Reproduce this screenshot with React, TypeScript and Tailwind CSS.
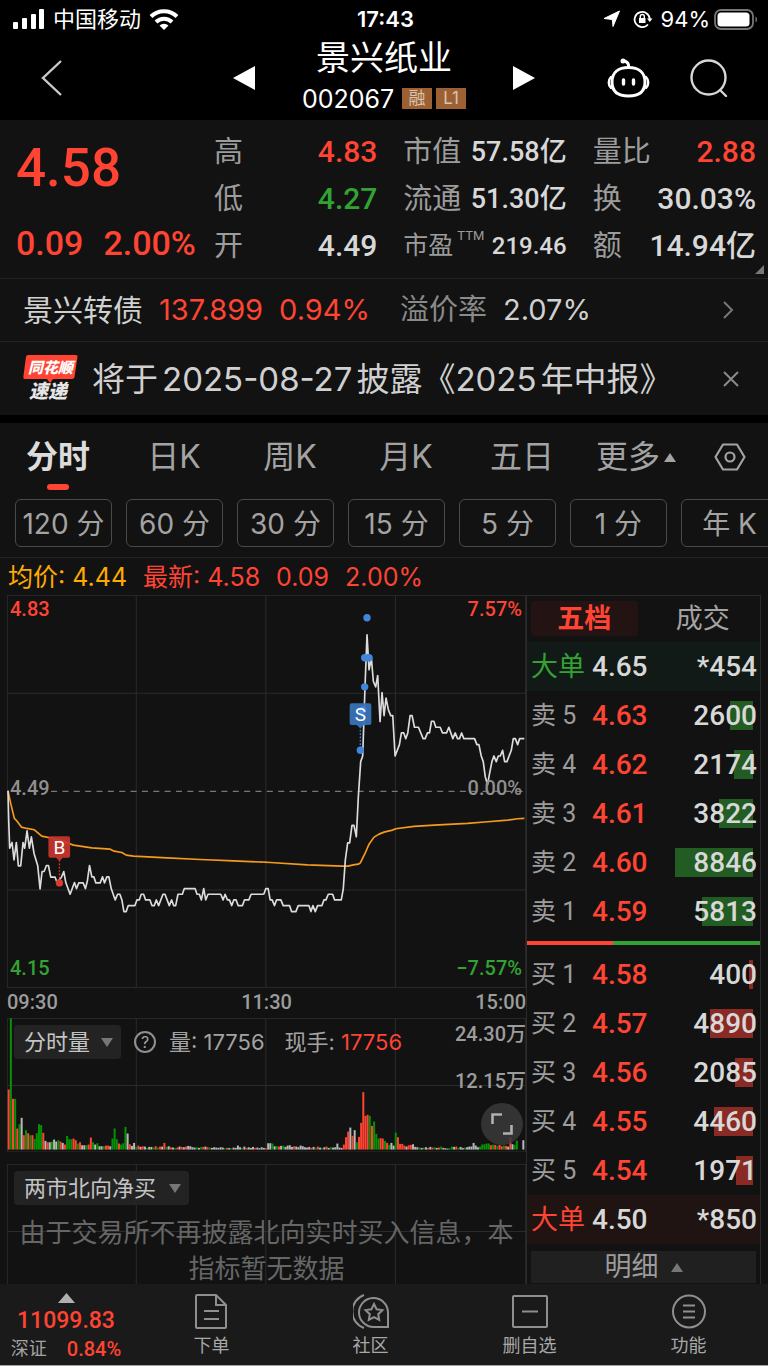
import type React from "react";
import { useState } from "react";
import clsx from "clsx";

const NUM = "[font-family:Roboto,'Noto_Sans_CJK_SC',sans-serif]";

const RED = "text-[#ff4433]";
const GREEN = "text-[#32a332]";

type Quote = { label: string; value: string; color?: string; ttm?: boolean };

const quotes: Quote[] = [
  { label: "高", value: "4.83", color: RED },
  { label: "市值", value: "57.58亿" },
  { label: "量比", value: "2.88", color: RED },
  { label: "低", value: "4.27", color: GREEN },
  { label: "流通", value: "51.30亿" },
  { label: "换", value: "30.03%" },
  { label: "开", value: "4.49" },
  { label: "市盈", value: "219.46", ttm: true },
  { label: "额", value: "14.94亿" },
];

const periods = ["分时", "日K", "周K", "月K", "五日"];
const minutes = ["120 分", "60 分", "30 分", "15 分", "5 分", "1 分", "年 K"];

const sells = [
  { level: 5, price: "4.63", volume: 2600 },
  { level: 4, price: "4.62", volume: 2174 },
  { level: 3, price: "4.61", volume: 3822 },
  { level: 2, price: "4.60", volume: 8846 },
  { level: 1, price: "4.59", volume: 5813 },
];

const buys = [
  { level: 1, price: "4.58", volume: 400 },
  { level: 2, price: "4.57", volume: 4890 },
  { level: 3, price: "4.56", volume: 2085 },
  { level: 4, price: "4.55", volume: 4460 },
  { level: 5, price: "4.54", volume: 1971 },
];

const MAX_VOLUME = 8846;

// price line, one string per session
const MORNING =
  "24,602 26,690 29,774 36,757 42,809 49,757 55,827 62,827 69,757 74,774 81,722 88,774 94,740 102,790 113,827 120,896 126,844 132,844 139,826 145,826 152,861 165,861 171,877 184,861 191,844 197,877 210,912 223,877 229,895 236,878 249,878 256,895 262,870 268,826 275,860 281,860 287,878 300,878 307,860 313,878 320,860 326,860 333,895 345,929 352,912 359,912 365,929 371,964 378,964 384,946 404,946 410,929 417,929 423,912 430,912 436,929 449,929 455,946 462,946 468,929 475,946 488,912 494,912 507,946 514,929 520,946 526,946 533,912 546,912 552,895 584,895 590,912 597,912 603,929 610,895 616,929 623,912 661,912 668,929 674,912 681,929 687,929 694,946 700,929 707,929 713,946 726,946 732,929 745,929 752,912 790,912";
const AFTERNOON =
  "10,912 16,895 23,895 29,929 35,929 42,946 48,929 61,929 68,946 87,946 93,964 106,964 113,946 145,946 151,964 157,946 164,964 171,946 184,946 190,929 196,929 203,912 216,912 222,929 242,929 248,895 254,810 261,758 267,758 274,706 280,706 287,740 293,620 300,515 306,498 310,380 313,290 319,135 325,240 332,205 338,275 345,291 351,257 358,395 364,308 370,377 376,325 383,360 390,377 396,377 403,498 416,464 422,429 429,429 435,446 441,429 448,377 454,377 461,412 473,412 487,446 493,446 500,429 506,429 512,394 519,394 525,412 538,412 545,429 557,429 564,412 576,446 583,429 590,446 596,446 602,429 609,446 641,446 648,464 654,464 661,498 667,515 673,560 680,584 686,550 693,515 699,498 706,515 712,498 718,498 725,481 731,515 738,515 751,481 757,446 763,446 770,464 776,446 790,446";
const AVG_MORNING =
  "24,602 32,640 43,685 50,692 64,711 80,715 103,719 125,738 160,745 185,752 220,765 275,773 330,777 342,783 365,787 378,795 400,798 500,803 600,808 700,812 790,816";
const AVG_AFTERNOON =
  "10,816 30,817 140,824 245,828 262,828 278,824 293,822 299,818 313,790 325,762 340,741 355,732 370,726 395,720 405,716 460,709 520,705 620,700 680,695 740,690 770,686 790,685";

// one token per minute: r / g / w for up, down and flat, then the bar height
const VOLUMES =
  "r180 g393 r152 g152 r63 g76 w95 r43 g58 r49 g43 r43 g32 g49 g76 g73 r50 w26 r22 w22 g24 w30 w24 g28 r24 w20 r15 g41 g31 g31 r33 r28 g18 r22 w13 w13 g13 r15 r36 g22 w15 g19 w10 w10 g10 r12 r12 w10 g33 g63 g31 r18 g15 g19 g68 w48 r16 w11 w20 g8 " +
  "r12 w8 r10 w9 g5 w8 w8 g7 r10 g6 r9 w9 r20 g8 w10 r7 w6 g5 r6 w9 r8 w7 r9 w11 w10 w7 w6 g7 w5 g8 r8 w9 r7 g6 w5 w7 w6 w5 w7 w6 g4 r5 w5 g4 w6 w5 w12 w7 g5 w9 r5 w7 w5 w8 r5 w6 w4 w7 w5 r4 " +
  "w19 w19 g18 w10 g10 r9 w11 g12 w8 w12 w13 w8 r10 w9 w7 w12 w10 w7 w6 w8 r5 w8 g6 r9 w6 g5 w7 r9 w5 g7 w6 w7 w18 w6 w5 r15 r37 r54 w66 r41 w58 g22 r38 r80 r172 r101 r104 g101 r71 g84 g47 g33 r34 r33 g26 r20 g14 w20 w12 g51 " +
  "r37 r17 r17 r12 w9 r13 r14 w16 w8 w7 g6 w5 g6 w7 r5 w8 r6 g7 w5 r6 g9 w5 w4 w3 g4 g9 w8 r9 g5 w8 w5 g6 w7 w9 w9 w20 w12 w7 g9 g15 g16 g18 g18 r13 g15 r14 g11 r14 r10 g12 r11 w9 r37 w16 g14 g27 w0 w0 w28";

const FILL: Record<string, string> = { r: "#ff4433", g: "#069106", w: "#b8b8b8" };

const GridLines = ({ h }: { h: number }) => (
  <g stroke="#2b2b2b" strokeWidth="3" fill="none">
    <rect x="1" y="1" width="1552" height={h - 2} />
    <path d={`M387 0V${h}M775 0V${h}M1163 0V${h}`} />
  </g>
);

const StatusBar = () => (
  <div className="flex h-[38px] shrink-0 items-center justify-between bg-black pr-[10px] pl-[13px]">
    <div className="flex flex-1 items-center">
      <svg width="32" height="20" viewBox="0 0 32 20" fill="#fff" aria-hidden="true">
        <rect x="0" y="13" width="5" height="7" rx="1" />
        <rect x="9" y="9" width="5" height="11" rx="1" />
        <rect x="18" y="5" width="5" height="15" rx="1" />
        <rect x="26" y="0" width="5" height="20" rx="1" />
      </svg>
      <span className="ml-2 text-[22px] leading-7">中国移动</span>
      <svg className="ml-2" width="30" height="21" viewBox="0 0 30 21" fill="none" stroke="#fff" strokeWidth="4" aria-hidden="true">
        <path d="M2 7.5a18.500 18.500 0 0 1 26 0" />
        <path d="M7 13a11.500 11.500 0 0 1 16 0" />
        <path d="M10.500 16.500a6.500 6.500 0 0 1 9 0L15 21z" fill="#fff" stroke="none" />
      </svg>
    </div>
    <span className="text-[22px] leading-7 font-semibold">17:43</span>
    <div className="flex flex-1 items-center justify-end">
      <svg width="18" height="18" viewBox="0 0 18 18" fill="#fff" stroke="#fff" strokeLinejoin="round" aria-hidden="true">
        <path d="M16.500 1 10 16.500 9.300 9.500 1 8.500z" />
      </svg>
      <svg className="ml-3" width="20" height="18" viewBox="0 0 20 18" fill="none" stroke="#fff" strokeWidth="1.800" aria-hidden="true">
        <path d="M15 14.500A7.600 7.600 0 1 1 16.800 9" />
        <path d="M14 8.500h5.500L16.800 12z" fill="#fff" stroke="none" />
        <rect x="6" y="8" width="6.500" height="5" fill="#fff" stroke="none" />
        <path d="M7.300 8V6.500a2 2 0 0 1 4 0V8" strokeWidth="1.400" />
      </svg>
      <span className="ml-2 text-[22px] leading-7">94%</span>
      <svg className="ml-1" width="44" height="21" viewBox="0 0 44 21" fill="none" aria-hidden="true">
        <rect x="1" y="1" width="38" height="19" rx="6" stroke="#777" strokeWidth="1.800" />
        <rect x="3.500" y="3.500" width="32" height="14" rx="3.500" fill="#fff" />
        <path d="M41.500 7.500c2 1 2 5 0 6z" fill="#777" />
      </svg>
    </div>
  </div>
);

const Header = () => (
  <header className="grid h-[82px] shrink-0 grid-cols-[1fr_302px_1fr] items-center bg-black pb-[3px]">
    <button type="button" aria-label="返回" className="ml-10 w-6">
      <svg width="24" height="38" viewBox="0 0 24 38" fill="none" stroke="#c9c9c9" strokeWidth="2.400">
        <path d="M21 2 3 19l18 17" />
      </svg>
    </button>
    <div className="flex items-center justify-between">
      <button type="button" aria-label="上一只">
        <svg width="22" height="24" viewBox="0 0 22 24" fill="#fff">
          <path d="M22 0v24L0 12z" />
        </svg>
      </button>
      <div className="flex flex-col items-center">
        <h1 className="mb-[6px] text-[34px] leading-9">景兴纸业</h1>
        <div className="flex h-[34px] items-center text-[25px] leading-8">
          002067
          <span className="ml-2 w-[30px] bg-[#9c6032] text-center text-[17px] leading-[21px] text-[#d9c4b2]">融</span>
          <span className="ml-1 w-[30px] bg-[#9c6032] text-center text-[17px] leading-[21px] text-[#d9c4b2]">L1</span>
        </div>
      </div>
      <button type="button" aria-label="下一只">
        <svg width="22" height="24" viewBox="0 0 22 24" fill="#fff">
          <path d="M0 0v24l22-12z" />
        </svg>
      </button>
    </div>
    <div className="flex items-center justify-end gap-10 pr-10">
      <button type="button" aria-label="问财助手">
        <svg width="43" height="40" viewBox="0 0 43 40" fill="none" stroke="#fff" strokeWidth="3" strokeLinecap="round">
          <path d="M21.500 9.500c10 0 16.500 5 16.500 14.500S32 38 21.500 38 5 33.500 5 24 11.500 9.500 21.500 9.500z" />
          <path d="M4 19c-3 3-3 8 0 11M39 19c3 3 3 8 0 11" strokeWidth="2.400" />
          <path d="M21.500 9.500c.5-3-1-5.500-4-6.500" />
          <circle cx="16" cy="3" r="1" fill="#fff" />
          <path d="M16.500 22v4M26.500 22v4" strokeWidth="3.400" />
        </svg>
      </button>
      <button type="button" aria-label="搜索">
        <svg width="38" height="38" viewBox="0 0 38 38" fill="none" stroke="#d6d6d6" strokeWidth="2.400" strokeLinecap="round">
          <circle cx="18.500" cy="18.500" r="17" />
          <path d="m30 31 6 6" />
        </svg>
      </button>
    </div>
  </header>
);

const QuotePanel = () => (
  <section className={clsx(NUM, "relative flex h-[158px] shrink-0 pt-2 pr-3 pl-4 font-medium")}>
    <div className={clsx("flex w-[198px] shrink-0 flex-col", RED)}>
      <span className="mt-2 text-[53px] leading-[64px]">4.58</span>
      <div className="mt-5 flex gap-5 text-[34px] leading-[46px]">
        <span>0.09</span>
        <span>2.00%</span>
      </div>
    </div>
    <dl className="grid h-[141px] flex-1 grid-cols-3 grid-rows-3 gap-x-[26px]">
      {quotes.map((q) => (
        <div key={q.label} className="flex items-center justify-between whitespace-nowrap">
          <dt className={clsx("flex font-normal text-[#9c9c9c]", q.ttm ? "text-[25px] leading-9" : "text-[29px] leading-10")}>
            {q.label}
            {q.ttm && <sup className="top-0 ml-1 text-[13px] leading-4">TTM</sup>}
          </dt>
          <dd
            className={clsx(
              "leading-10",
              q.ttm ? "text-2xl" : q.label.length > 1 && !q.color ? "text-[27px]" : "text-[30px]",
              q.color ?? "text-[#d8d8d8]"
            )}
          >
            {q.value}
          </dd>
        </div>
      ))}
    </dl>
    <svg className="absolute right-1 bottom-1" width="9" height="9" viewBox="0 0 9 9" fill="#777" aria-hidden="true">
      <path d="M9 0v9H0z" />
    </svg>
  </section>
);

const News = () => (
  <>
    <a href="#bond" className="flex h-16 shrink-0 items-center border-y border-[#222] pr-[34px] pl-[23px] text-[29px] leading-10 whitespace-nowrap">
      <span className="text-[30px] text-[#d0d0d0]">景兴转债</span>
      <span className={clsx("ml-4", RED)}>137.899</span>
      <span className={clsx("ml-4", RED)}>0.94%</span>
      <span className="ml-[30px] text-[#8a8a8a]">溢价率</span>
      <span className="ml-4 text-[#d0d0d0]">2.07%</span>
      <svg className="ml-auto" width="12" height="20" viewBox="0 0 12 20" fill="none" stroke="#777" strokeWidth="2" aria-hidden="true">
        <path d="m2 2 8 8-8 8" />
      </svg>
    </a>
    <div className="flex h-[73px] shrink-0 items-center pr-[29px] pl-[23px]">
      <svg width="55" height="50" viewBox="0 0 55 50" className="shrink-0" role="img" aria-label="同花顺速递">
        <path d="M5 1h48q2 0 1.500 2l-3 20q-.3 2-2.500 2H30l-3 4-3-4H2q-2 0-1.700-2L3 3q.3-2 2-2z" fill="#ff4433" />
        <text x="5" y="19" fontSize="15" fontStyle="italic" fontWeight="900" fill="#fff">同花顺</text>
        <text x="6" y="44" fontSize="19" fontStyle="italic" fontWeight="900" fill="#e6e6e6">速递</text>
      </svg>
      <p className="ml-[14px] text-[33px] leading-[44px] whitespace-nowrap text-[#d0d0d0]">
        将于<span className="mx-1">2025-08-27</span>披露《2025<span className="ml-1">年中报》</span>
      </p>
      <button type="button" aria-label="关闭" className="ml-auto">
        <svg width="16" height="16" viewBox="0 0 16 16" stroke="#8a8a8a" strokeWidth="2">
          <path d="m1 1 14 14M15 1 1 15" />
        </svg>
      </button>
    </div>
  </>
);

const PeriodTabs = () => {
  const [period, setPeriod] = useState("分时");

  return (
    <nav className="shrink-0 border-t-8 border-b border-t-black border-b-[#222]">
      <div className="grid h-[76px] grid-cols-[repeat(5,116fr)_112fr_76fr] text-[32px] leading-[44px] text-[#a3a3a3]">
        {periods.map((p) => (
          <button
            key={p}
            type="button"
            onClick={() => setPeriod(p)}
            className={clsx("flex flex-col items-center pt-3", p === period && "font-bold text-[#dcdcdc]")}
          >
            {p}
            {p === period && <span className="mt-[5px] h-[6px] w-[22px] rounded-sm bg-[#ff4433]" />}
          </button>
        ))}
        <button type="button" className="flex justify-center pt-3">
          更多
          <svg className="mt-[18px] ml-1" width="12" height="9" viewBox="0 0 12 9" fill="#a3a3a3" aria-hidden="true">
            <path d="m6 0 6 9H0z" />
          </svg>
        </button>
        <button type="button" aria-label="设置" className="flex justify-center pt-[20px]">
          <svg width="32" height="28" viewBox="0 0 32 28" fill="none" stroke="#a3a3a3" strokeWidth="2.200" strokeLinejoin="round">
            <path d="M9 1.500h14L30.500 14 23 26.500H9L1.500 14z" />
            <circle cx="16" cy="14" r="4.500" />
          </svg>
        </button>
      </div>
      <div className="flex gap-[14px] overflow-hidden pb-[10px] pl-[15px]">
        {minutes.map((m) => (
          <button key={m} type="button" className="h-12 w-[97px] shrink-0 rounded-md border border-[#4a4a4a] pt-[2px] text-[28px] leading-9 whitespace-nowrap text-[#a3a3a3]">
            {m}
          </button>
        ))}
      </div>
    </nav>
  );
};

const PriceChart = () => (
  <div className={clsx(NUM, "relative text-xl leading-6 font-medium")}>
    <svg className="block h-auto w-full" viewBox="0 0 1554 1176" role="img" aria-label="分时走势">
      <GridLines h={1176} />
      <path d="M0 294H1554M0 883H1554" stroke="#2b2b2b" strokeWidth="3" />
      <path d="M132 588H1554" stroke="#777" strokeWidth="3" strokeDasharray="18 16" />
      <g transform="translate(-21 -16)" fill="none" strokeWidth="5" strokeLinejoin="round">
        <polyline points={AVG_MORNING} stroke="#f59a1c" />
        <polyline points={MORNING} stroke="#dcdcdc" />
        <path d="M178 800V878" stroke="#d93a30" strokeDasharray="5 5" strokeWidth="4" />
        <circle cx="178" cy="878" r="11" fill="#d93a30" />
        <path d="M151 738h53q6 0 6 6v53q0 6-6 6h-16l-10 10-10-10h-17q-6 0-6-6v-53q0-6 6-6z" fill="#c9352c" fillOpacity="0.92" />
        <text x="178" y="792" fontSize="57" fontWeight="400" textAnchor="middle" fill="#fff">B</text>
      </g>
      <g transform="translate(759 -16)" fill="none" strokeWidth="5" strokeLinejoin="round">
        <polyline points={AVG_AFTERNOON} stroke="#f59a1c" />
        <polyline points={AFTERNOON} stroke="#dcdcdc" />
        <path d="M299 400V480" stroke="#3f83d6" strokeDasharray="5 5" strokeWidth="4" />
        <g fill="#4285dd">
          <circle cx="319" cy="84" r="11" />
          <circle cx="312" cy="204" r="11" />
          <circle cx="325" cy="204" r="11" />
          <circle cx="312" cy="291" r="11" />
          <circle cx="299" cy="481" r="11" />
        </g>
        <path d="M273 340h53q6 0 6 6v53q0 6-6 6h-16l-11 10-11-10h-15q-6 0-6-6v-53q0-6 6-6z" fill="#3a72b8" fillOpacity="0.95" />
        <circle cx="306" cy="360" r="11" fill="#4285dd" />
        <text x="299" y="394" fontSize="57" fontWeight="400" textAnchor="middle" fill="#fff">S</text>
      </g>
    </svg>
    <span className={clsx("absolute top-[2px] left-[3px]", RED)}>4.83</span>
    <span className={clsx("absolute top-[2px] right-1", RED)}>7.57%</span>
    <span className="absolute top-1/2 left-[3px] -mt-[15px] text-[#8f8f8f]">4.49</span>
    <span className="absolute top-1/2 right-1 -mt-[15px] text-[#8f8f8f]">0.00%</span>
    <span className={clsx("absolute bottom-2 left-[3px]", GREEN)}>4.15</span>
    <span className={clsx("absolute right-1 bottom-2", GREEN)}>−7.57%</span>
  </div>
);

const Picker = ({ label, id, width }: { label: string; id: string; width: string }) => (
  <div className={clsx("relative", width)}>
    <select
      id={id}
      aria-label={label}
      className="h-[34px] w-full appearance-none rounded-sm bg-[#232323] pl-[10px] text-[22px] leading-8 text-[#c4c4c4]"
    >
      <option>{label}</option>
    </select>
    <svg className="pointer-events-none absolute top-[13px] right-2" width="12" height="9" viewBox="0 0 12 9" fill="#777" aria-hidden="true">
      <path d="M0 0h12L6 9z" />
    </svg>
  </div>
);

const VolumeChart = () => (
  <div className="relative">
    <svg className="block h-auto w-full" viewBox="0 0 1554 402" role="img" aria-label="成交量">
      <GridLines h={402} />
      <path d="M0 202H1554" stroke="#2b2b2b" strokeWidth="3" />
      {VOLUMES.split(" ").map((v, i) => {
        const height = Number(v.slice(1));
        return <rect key={i} x={2 + i * 6.475} y={394 - height} width="6" height={height} fill={FILL[v[0]]} />;
      })}
    </svg>
    <div className="absolute top-[7px] left-[7px] flex items-center text-[22px] leading-8 whitespace-nowrap text-[#a3a3a3]">
      <Picker id="volume-kind" label="分时量" width="w-[107px]" />
      <button type="button" aria-label="说明" className="mx-[13px] flex h-[22px] w-[22px] items-center justify-center rounded-full border-2 border-[#8f8f8f] text-base leading-5">
        ?
      </button>
      <span>量: 17756</span>
      <span className="ml-5">现手:</span>
      <span className={clsx("ml-[6px]", RED)}>17756</span>
    </div>
    <span className={clsx(NUM, "absolute top-1 right-0 text-xl leading-6 font-medium text-[#9c9c9c]")}>24.30万</span>
    <span className={clsx(NUM, "absolute top-[51px] right-0 text-xl leading-6 font-medium text-[#9c9c9c]")}>12.15万</span>
    <button type="button" aria-label="全屏" className="absolute right-[3px] bottom-[7px] flex h-[42px] w-[42px] items-center justify-center rounded-full bg-[#3a3a3a]/85">
      <svg width="22" height="22" viewBox="0 0 22 22" fill="none" stroke="#b0b0b0" strokeWidth="2.600">
        <path d="M1.500 11V1.500H11M20.500 12v8.500H12" />
      </svg>
    </button>
  </div>
);

const NorthPanel = () => (
  <div className="relative mt-3">
    <svg className="block h-auto w-full" viewBox="0 0 1554 402" aria-hidden="true">
      <GridLines h={402} />
      <path d="M0 202H1554" stroke="#2b2b2b" strokeWidth="3" />
    </svg>
    <div className="absolute inset-x-0 top-[7px]">
      <div className="ml-[7px]">
        <Picker id="north-kind" label="两市北向净买" width="w-[175px]" />
      </div>
      <p className="mt-[10px] text-center text-[26px] leading-9 text-[#666]">
        由于交易所不再披露北向实时买入信息，本指标暂无数据
      </p>
    </div>
  </div>
);

type LevelProps = { side: string; level: number; price: string; volume: number; bar: string };

const LevelRow: React.FC<LevelProps> = ({ side, level, price, volume, bar }) => (
  <tr className="h-[49px]">
    <th scope="row" className="pl-1 text-left text-[25px] font-normal whitespace-nowrap text-[#9c9c9c]">
      {side} {level}
    </th>
    <td className={RED}>{price}</td>
    <td className="relative pr-[3px] text-right">
      <span
        className={clsx("absolute top-[10px] right-[7px] h-[29px]", bar)}
        style={{ width: `${Math.round((volume / MAX_VOLUME) * 78)}px` }}
      />
      <span className="relative">{volume}</span>
    </td>
  </tr>
);

const OrderBook = () => {
  const [tab, setTab] = useState("五档");

  return (
    <aside className="mr-[7px] w-[235px] shrink-0 border-x border-t border-[#2b2b2b]">
      <div className="flex h-[46px] gap-3 px-1 pt-[5px]">
        {["五档", "成交"].map((t) => (
          <button
            key={t}
            type="button"
            onClick={() => setTab(t)}
            className={clsx(
              "h-[35px] w-[107px] rounded text-[27px] leading-[35px]",
              t === tab ? clsx("bg-[#231413] font-bold", RED) : "text-[#a3a3a3]"
            )}
          >
            {t}
          </button>
        ))}
      </div>
      <table className={clsx(NUM, "w-full table-fixed border-collapse text-[28px] leading-8 font-medium text-[#d8d8d8]")}>
        <colgroup>
          <col className="w-[65px]" />
          <col className="w-[70px]" />
          <col />
        </colgroup>
        <tbody>
          <tr className="h-[49px] bg-[#111a16]">
            <th scope="row" className={clsx("pl-1 text-left text-[27px] font-normal whitespace-nowrap", GREEN)}>大单</th>
            <td>4.65</td>
            <td className="pr-[3px] text-right">*454</td>
          </tr>
          {sells.map((s) => (
            <LevelRow key={s.level} side="卖" bar="bg-[#225c22]" {...s} />
          ))}
        </tbody>
        <tbody>
          <tr className="h-[14px]">
            <td colSpan={3}>
              <div className="flex h-1">
                <span className="w-[37%] bg-[#ff4433]" />
                <span className="flex-1 bg-[#32a332]" />
              </div>
            </td>
          </tr>
          {buys.map((b) => (
            <LevelRow key={b.level} side="买" bar="bg-[#8a2a24]" {...b} />
          ))}
          <tr className="h-[49px] bg-[#201413]">
            <th scope="row" className={clsx("pl-1 text-left text-[27px] font-normal whitespace-nowrap", RED)}>大单</th>
            <td>4.50</td>
            <td className="pr-[3px] text-right">*850</td>
          </tr>
        </tbody>
      </table>
      <div className="px-1 pt-[7px]">
        <button type="button" className="flex h-8 w-full items-center justify-center gap-3 bg-[#202020] text-[27px] leading-8 text-[#9c9c9c]">
          明细
          <svg width="12" height="9" viewBox="0 0 12 9" fill="#777" aria-hidden="true">
            <path d="m6 0 6 9H0z" />
          </svg>
        </button>
      </div>
    </aside>
  );
};

const navItems = [
  {
    label: "下单",
    icon: <path d="M3 1h19l10 10v22q0 1-1 1H3q-1 0-1-1V2q0-1 1-1zM22 1v10h10M10 17h15M10 25h15" />,
  },
  {
    label: "社区",
    icon: (
      <>
        <path d="M35 33V18A14.500 14.500 0 1 0 21 33z" />
        <path d="M11 1A17.500 17.500 0 0 0 11 34" />
        <path d="m21 10 2.600 5.300 5.800.8-4.200 4.100 1 5.800-5.200-2.800-5.200 2.800 1-5.800-4.200-4.100 5.800-.8z" />
      </>
    ),
  },
  {
    label: "删自选",
    icon: (
      <>
        <rect x="1" y="2" width="34" height="31" rx="1" />
        <path d="M10 17.500h16" />
      </>
    ),
  },
  {
    label: "功能",
    icon: (
      <>
        <circle cx="18" cy="17.500" r="16" />
        <path d="M12 11.500h12M12 17.500h12M12 23.500h12" />
      </>
    ),
  },
];

const BottomNav = () => (
  <nav className="grid h-[82px] shrink-0 grid-cols-[132fr_159fr_159fr_159fr_159fr] border-b border-[#a0a0a0] bg-[#1a1a1a]">
    <button type="button" className={clsx(NUM, "flex flex-col items-center pt-[9px] font-medium", RED)}>
      <svg width="17" height="10" viewBox="0 0 17 10" fill="#b0b0b0" aria-hidden="true">
        <path d="m8.500 0 8.500 10H0z" />
      </svg>
      <span className="mt-1 text-[23px] leading-7">11099.83</span>
      <span className="flex items-center gap-5 text-xl leading-7">
        <span className="text-[18px] font-normal text-[#a3a3a3]">深证</span>
        0.84%
      </span>
    </button>
    {navItems.map((item) => (
      <a key={item.label} href={`#${item.label}`} className="flex flex-col items-center pt-[10px] text-[18px] leading-6 text-[#a8a8a8]">
        <svg width="36" height="35" viewBox="0 0 36 35" fill="none" stroke="#8f8f8f" strokeWidth="2" aria-hidden="true">
          {item.icon}
        </svg>
        <span className="mt-[5px]">{item.label}</span>
      </a>
    ))}
  </nav>
);

export default function App() {
  return (
    <div className="flex h-screen flex-col overflow-hidden bg-[#121212] text-white [font-family:Inter,'Noto_Sans_CJK_SC',sans-serif]">
      <StatusBar />
      <Header />
      <QuotePanel />
      <News />
      <PeriodTabs />

      {/* Average / latest price */}
      <div className={clsx("flex h-[37px] shrink-0 items-center pl-2 text-[25px] leading-9 whitespace-nowrap", RED)}>
        <span className="text-[#ffaa00]">均价: 4.44</span>
        <span className="ml-4">最新: 4.58</span>
        <span className="ml-4">0.09</span>
        <span className="ml-4">2.00%</span>
      </div>

      {/* Charts and order book */}
      <main className="flex min-h-0 flex-1 overflow-hidden">
        <div className="min-w-0 flex-1 pl-[7px]">
          <PriceChart />
          <div className={clsx(NUM, "flex h-[30px] justify-between text-xl leading-7 font-medium text-[#9c9c9c]")}>
            <span>09:30</span>
            <span>11:30</span>
            <span>15:00</span>
          </div>
          <VolumeChart />
          <NorthPanel />
        </div>
        <OrderBook />
      </main>

      <BottomNav />
    </div>
  );
}
